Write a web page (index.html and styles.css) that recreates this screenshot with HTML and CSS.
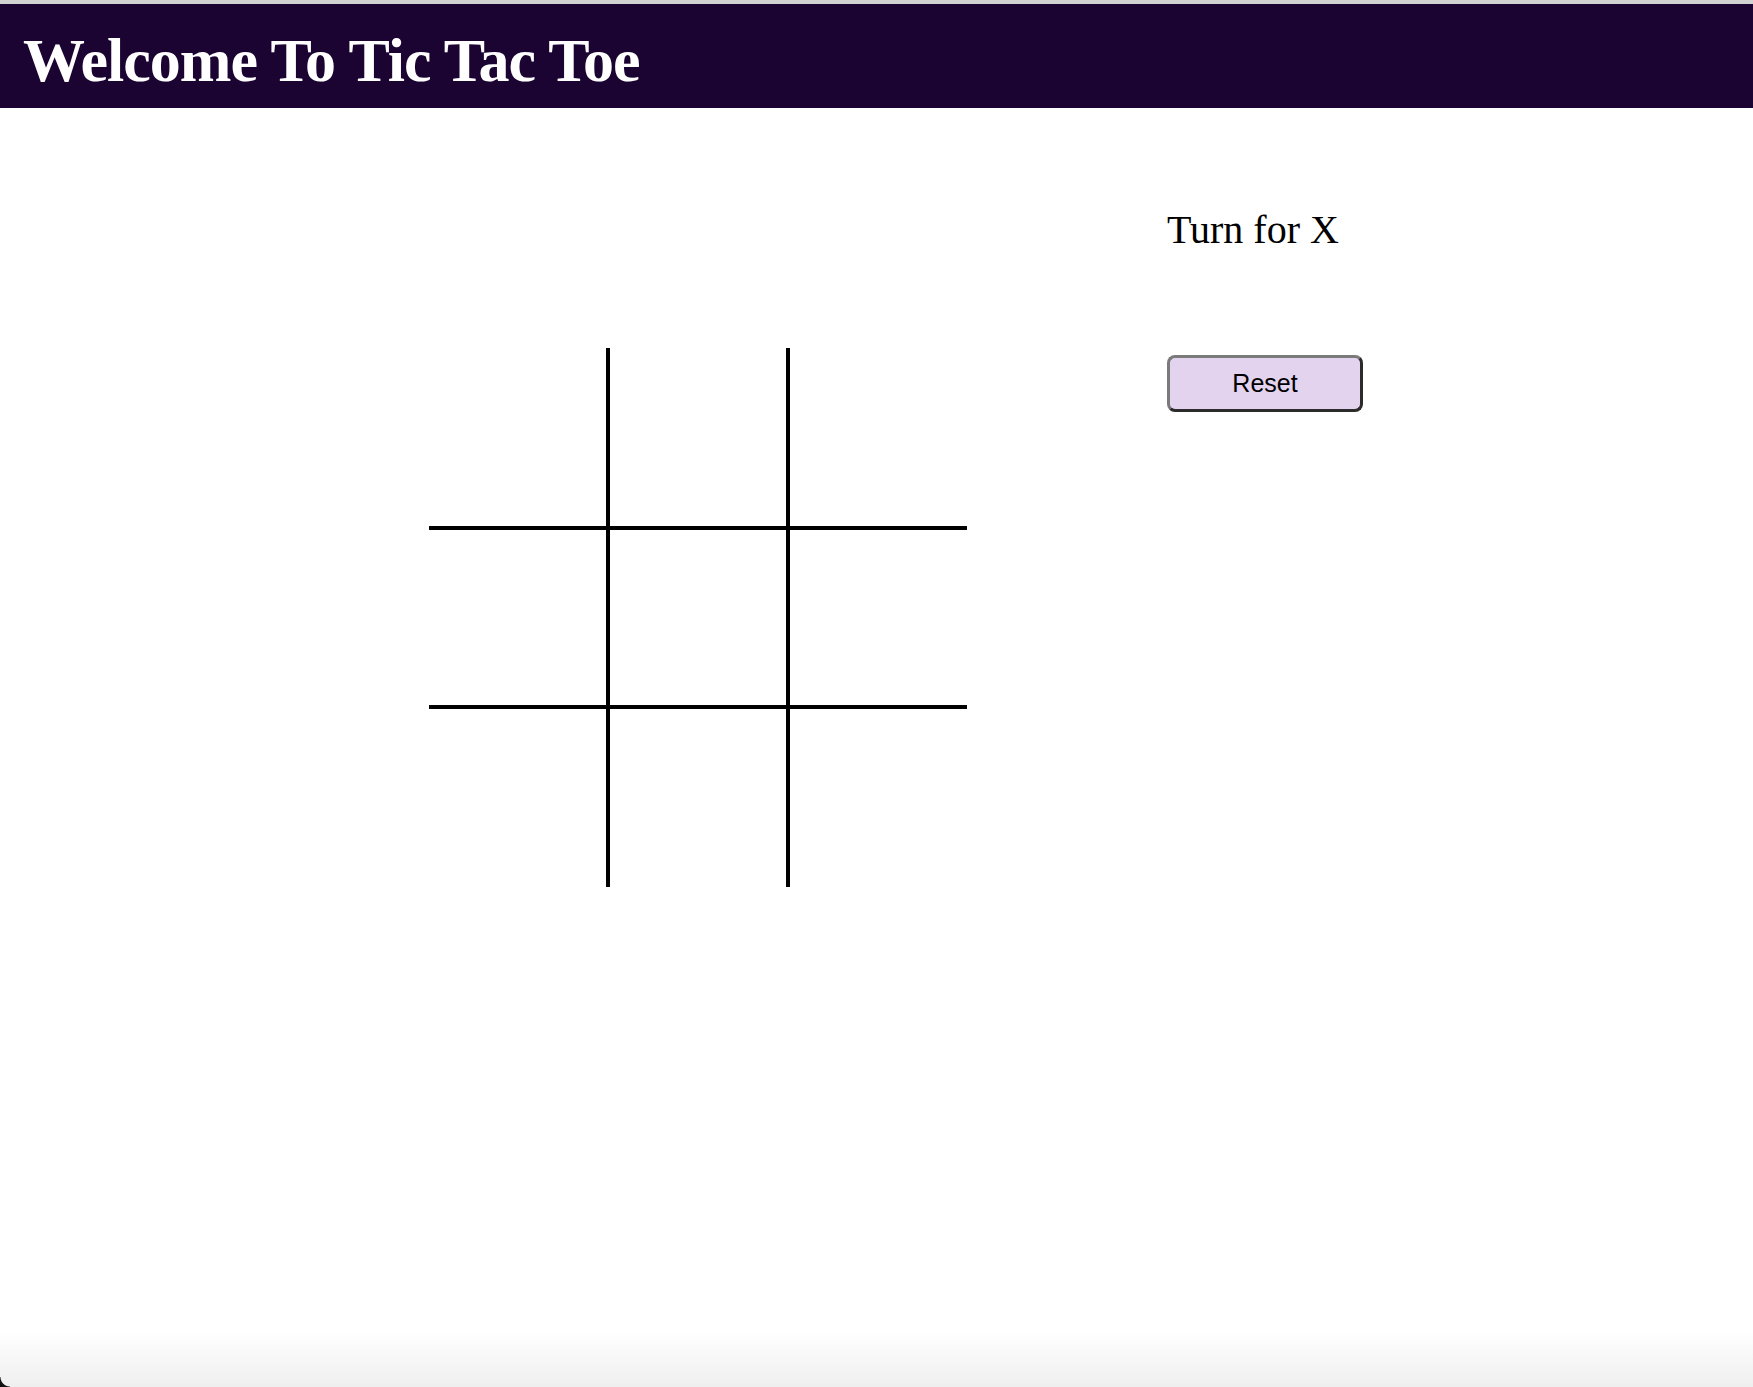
FILE: index.html
```html
<!DOCTYPE html>
<html lang="en">
<head>
<meta charset="utf-8">
<title>Tic Tac Toe</title>
<link rel="stylesheet" href="styles.css">
</head>
<body>
<div class="topline"></div>
<header class="header">
  <h1 class="title">Welcome To Tic Tac Toe</h1>
</header>
<main class="main">
  <section class="board-wrap">
    <div class="board">
      <div class="cell"></div><div class="cell"></div><div class="cell"></div>
      <div class="cell"></div><div class="cell"></div><div class="cell"></div>
      <div class="cell"></div><div class="cell"></div><div class="cell"></div>
    </div>
  </section>
  <aside class="panel">
    <p class="turn">Turn for X</p>
    <button class="reset" type="button">Reset</button>
  </aside>
</main>
<div class="shade"></div>
<div class="corner"></div>
</body>
</html>
```
FILE: styles.css
```css
html, body {
  margin: 0;
  padding: 0;
  background: #ffffff;
  height: 100%;
  overflow: hidden;
}
body {
  font-family: "Liberation Serif", "Times New Roman", serif;
  color: #000;
}
.topline {
  height: 4px;
  background: #d2d2d2;
}
.header {
  background: #1b0332;
  height: 104px;
  box-sizing: border-box;
  padding: 25px 0 0 23px;
}
.title {
  margin: 0;
  color: #ffffff;
  font-family: "Liberation Serif", "Times New Roman", serif;
  font-weight: bold;
  font-size: 62px;
  line-height: 62px;
  letter-spacing: -1px;
  white-space: nowrap;
}
.main {
  display: flex;
  align-items: flex-start;
  padding-left: 429px;
}
.board-wrap {
  padding-top: 240px;
}
.board {
  display: grid;
  grid-template-columns: 177px 176px 177px;
  grid-template-rows: 178px 175px 178px;
  gap: 4px;
  background: #000;
}
.cell {
  background: #fff;
}
.panel {
  margin-left: 200px;
  padding-top: 99px;
  display: flex;
  flex-direction: column;
  align-items: flex-start;
}
.turn {
  margin: 0;
  font-size: 40px;
  line-height: 45px;
  white-space: nowrap;
}
.reset {
  margin-top: 103px;
  width: 196px;
  height: 57px;
  box-sizing: border-box;
  border: 3px solid;
  border-color: #7a7a7a #2b2b2b #2b2b2b #7a7a7a;
  border-radius: 8px;
  background: #e3d3ef;
  font-family: "Liberation Sans", Arial, sans-serif;
  font-size: 25px;
  color: #000;
  padding: 0;
}
.shade {
  position: fixed;
  left: 0;
  right: 0;
  bottom: 0;
  height: 56px;
  background: linear-gradient(to bottom, rgba(239,239,239,0) 0%, rgba(239,239,239,1) 100%);
  border-bottom-left-radius: 12px;
  pointer-events: none;
}
.corner {
  position: fixed;
  left: 0;
  bottom: 0;
  width: 10px;
  height: 10px;
  background: radial-gradient(circle at 100% 0%, transparent 9px, #111 10px);
  pointer-events: none;
}
```
